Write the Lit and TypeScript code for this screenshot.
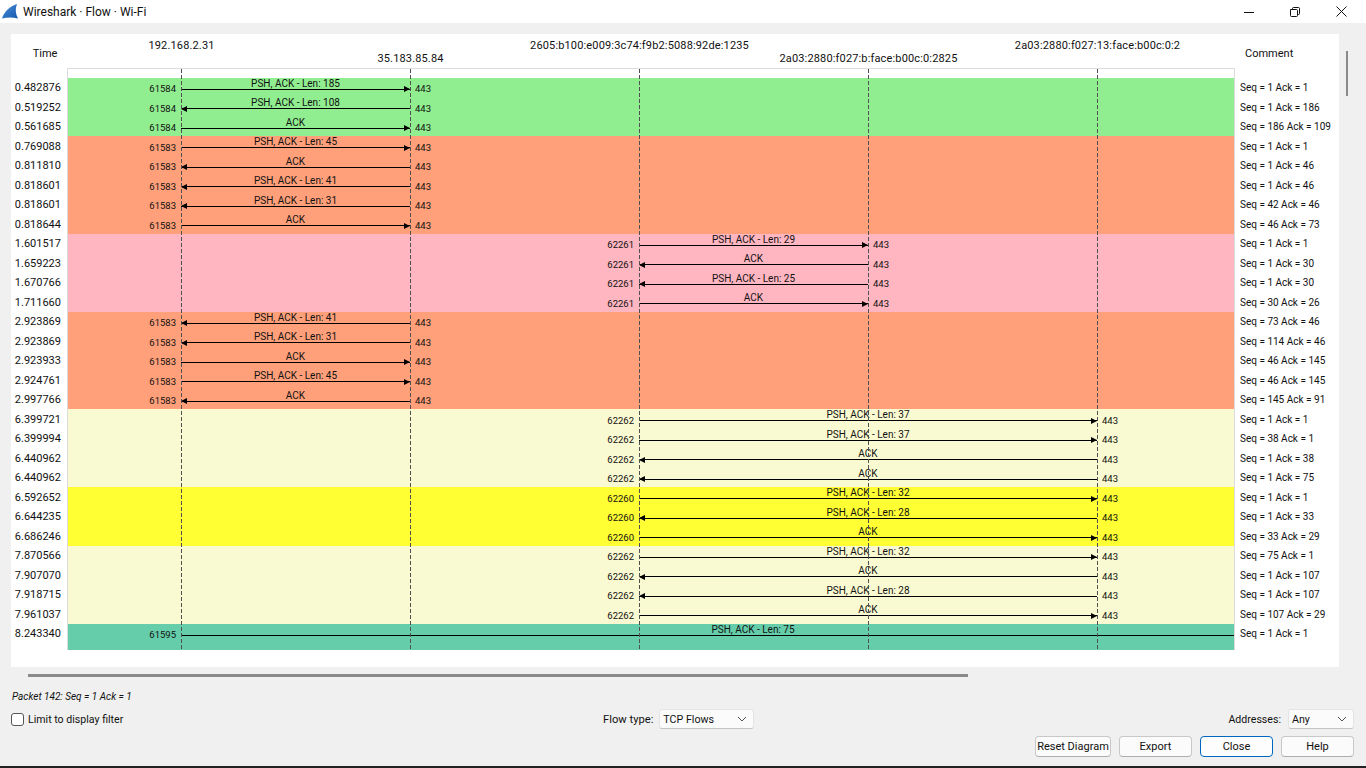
import { LitElement, html, css } from 'lit';
import { customElement } from 'lit/decorators.js';

const NODE_STEP = 229;
const NODE_START = 113;
const nodeX = (i: number) => NODE_START + NODE_STEP * i;

const NODES = [
  { name: '192.168.2.31', low: false },
  { name: '35.183.85.84', low: true },
  { name: '2605:b100:e009:3c74:f9b2:5088:92de:1235', low: false },
  { name: '2a03:2880:f027:b:face:b00c:0:2825', low: true },
  { name: '2a03:2880:f027:13:face:b00c:0:2', low: false },
];

// time, direction (r / l), label, seq, ack
type Row = [string, 'r' | 'l', string, number, number];
interface Flow {
  color: string;
  port: string;
  from: number;
  to: number;
  rows: Row[];
}

const len = (n: number) => `PSH, ACK - Len: ${n}`;

const FLOWS: Flow[] = [
  { color: '#90ee90', port: '61584', from: 0, to: 1, rows: [
    ['0.482876', 'r', len(185), 1, 1],
    ['0.519252', 'l', len(108), 1, 186],
    ['0.561685', 'r', 'ACK', 186, 109],
  ] },
  { color: '#ffa07a', port: '61583', from: 0, to: 1, rows: [
    ['0.769088', 'r', len(45), 1, 1],
    ['0.811810', 'l', 'ACK', 1, 46],
    ['0.818601', 'l', len(41), 1, 46],
    ['0.818601', 'l', len(31), 42, 46],
    ['0.818644', 'r', 'ACK', 46, 73],
  ] },
  { color: '#ffb6c1', port: '62261', from: 2, to: 3, rows: [
    ['1.601517', 'r', len(29), 1, 1],
    ['1.659223', 'l', 'ACK', 1, 30],
    ['1.670766', 'l', len(25), 1, 30],
    ['1.711660', 'r', 'ACK', 30, 26],
  ] },
  { color: '#ffa07a', port: '61583', from: 0, to: 1, rows: [
    ['2.923869', 'l', len(41), 73, 46],
    ['2.923869', 'l', len(31), 114, 46],
    ['2.923933', 'r', 'ACK', 46, 145],
    ['2.924761', 'r', len(45), 46, 145],
    ['2.997766', 'l', 'ACK', 145, 91],
  ] },
  { color: '#fafad2', port: '62262', from: 2, to: 4, rows: [
    ['6.399721', 'r', len(37), 1, 1],
    ['6.399994', 'r', len(37), 38, 1],
    ['6.440962', 'l', 'ACK', 1, 38],
    ['6.440962', 'l', 'ACK', 1, 75],
  ] },
  { color: '#ffff33', port: '62260', from: 2, to: 4, rows: [
    ['6.592652', 'r', len(32), 1, 1],
    ['6.644235', 'l', len(28), 1, 33],
    ['6.686246', 'r', 'ACK', 33, 29],
  ] },
  { color: '#fafad2', port: '62262', from: 2, to: 4, rows: [
    ['7.870566', 'r', len(32), 75, 1],
    ['7.907070', 'l', 'ACK', 1, 107],
    ['7.918715', 'l', len(28), 1, 107],
    ['7.961037', 'r', 'ACK', 107, 29],
  ] },
];

const LAST = { time: '8.243340', port: '61595', label: len(75), seq: 1, ack: 1 };

const chevron = html`<svg class="chev" width="10" height="6" viewBox="0 0 10 6">
  <path d="M1 1l4 4 4-4" fill="none" stroke="#555" stroke-width="1" />
</svg>`;

@customElement('app-root')
export class AppRoot extends LitElement {
  static styles = css`
    :host {
      display: flex;
      flex-direction: column;
      width: 1366px;
      height: 768px;
      overflow: hidden;
      background: #f0f0f0;
      color: #111;
      font-family: Roboto, 'Liberation Sans', sans-serif;
      font-size: 12px;
    }
    .titlebar {
      display: flex;
      align-items: center;
      height: 23px;
      background: #fff;
      flex: none;
    }
    .titlebar .logo { margin-left: 2px; }
    .titlebar .title { margin-left: 3px; font-size: 12px; }
    .controls { display: flex; margin-left: auto; align-items: center; }
    .controls svg { display: block; }
    .controls .min { margin-right: 36px; }
    .controls .max { margin-right: 36px; }
    .controls .close { margin-right: 19px; }

    .main { display: flex; margin-top: 11px; padding-left: 11px; flex: none; }
    .canvas {
      display: flex;
      width: 1328px;
      height: 633px;
      background: #fff;
    }
    .vthumb {
      width: 2px;
      height: 45px;
      margin: 17px 0 0 7px;
      background: #8a8a8a;
    }

    .time-col { width: 56px; flex: none; }
    .comment-col { width: 104px; flex: none; }
    .col-head { height: 44px; display: flex; align-items: flex-start; padding-top: 13px; box-sizing: border-box; font-size: 11px; }
    .time-col .col-head { justify-content: center; padding-left: 12px; }
    .comment-col .col-head { padding-left: 10px; }
    .cell { height: 19.5px; line-height: 20px; font-size: 11px; white-space: nowrap; }
    .time-col .cell { text-align: right; padding-right: 6px; }
    .comment-col .cell { padding-left: 5px; font-size: 10px; }

    .plot-wrap { width: 1168px; flex: none; display: flex; flex-direction: column; }
    .node-heads {
      display: grid;
      grid-template-columns: repeat(5, 229px);
      height: 34px;
      flex: none;
    }
    .node-head { text-align: center; font-size: 11px; padding-top: 5px; white-space: nowrap; letter-spacing: 0.15px; }
    .node-head.low { padding-top: 18px; }
    .plot {
      position: relative;
      height: 582px;
      box-sizing: border-box;
      border: 1px solid #dcdcdc;
      border-bottom: none;
      padding-top: 8.9px;
    }
    .band { display: flow-root; }
    .row { position: relative; height: 19.5px; }
    .row.last { height: 26.1px; }
    .lifeline {
      position: absolute;
      top: 0;
      bottom: 0;
      width: 1px;
      background: repeating-linear-gradient(to bottom, #505050 0 4px, transparent 4px 6px);
    }
    .line { position: absolute; top: 11px; height: 1px; background: #000; }
    .head {
      position: absolute;
      top: -2.5px;
      width: 0;
      height: 0;
      border-top: 3px solid transparent;
      border-bottom: 3px solid transparent;
    }
    .head.r { right: 0; border-left: 6px solid #000; }
    .head.l { left: 0; border-right: 6px solid #000; }
    .label {
      position: absolute;
      top: 0;
      line-height: 11px;
      font-size: 10px;
      white-space: nowrap;
      transform: translateX(-50%);
    }
    .port { position: absolute; top: 5.5px; line-height: 12px; font-size: 9.5px; }
    .port.left { transform: translateX(-100%); }

    .hscroll { width: 940px; height: 3px; margin: 7px 0 0 28px; background: #8a8a8a; flex: none; }
    .status { margin: 13px 0 0 12px; height: 14px; line-height: 14px; font-size: 10px; font-style: italic; flex: none; }

    .options { display: flex; align-items: center; height: 20px; margin-top: 5px; padding: 0 12px 0 11px; flex: none; }
    .check { display: flex; align-items: center; gap: 4px; width: 592px; font-size: 10.6px; }
    .box { width: 11px; height: 11px; border: 1px solid #555; border-radius: 3px; background: #fff; }
    .flow { display: flex; align-items: center; gap: 6px; font-size: 11.2px; }
    .addr { display: flex; align-items: center; gap: 7px; margin-left: auto; font-size: 10.6px; }
    .select {
      display: flex;
      align-items: center;
      justify-content: space-between;
      box-sizing: border-box;
      height: 20px;
      padding: 0 6px 0 3px;
      background: #fbfbfb;
      border: 1px solid #e4e4e4;
      border-bottom-color: #c4c4c4;
      border-radius: 3px;
      font-size: 10.7px;
    }
    .select.flow-select { width: 95px; }
    .select.addr-select { width: 66px; }

    .buttons { display: flex; justify-content: flex-end; gap: 8px; margin-top: 7px; padding-right: 12px; flex: none; }
    button {
      width: 73px;
      height: 21px;
      padding: 0;
      font: inherit;
      font-size: 11px;
      white-space: nowrap;
      color: inherit;
      background: #fbfbfb;
      border: 1px solid #c8c8c8;
      border-bottom-color: #aeaeae;
      border-radius: 4px;
    }
    button.wide { width: 76px; }
    button.primary { border-color: #0067c0; background: #fdfdfd; }

    .edge { margin-top: auto; height: 2px; background: #222; flex: none; }
  `;

  private renderArrow(flow: Flow, row: Row) {
    const [, dir, label] = row;
    const x1 = nodeX(flow.from);
    const x2 = nodeX(flow.to);
    return html`<div class="row">
      <span class="label" style="left:${(x1 + x2) / 2}px">${label}</span>
      <span class="port left" style="left:${x1 - 5}px">${flow.port}</span>
      <span class="port" style="left:${x2 + 5}px">443</span>
      <div class="line" style="left:${x1}px;width:${x2 - x1}px"><i class="head ${dir}"></i></div>
    </div>`;
  }

  render() {
    const rows = FLOWS.flatMap((f) => f.rows);
    return html`
      <div class="titlebar">
        <svg class="logo" width="18" height="17" viewBox="0 0 18 17">
          <defs>
            <linearGradient id="fin" x1="0" y1="0" x2="1" y2="1">
              <stop offset="0" stop-color="#4a8fdc" />
              <stop offset="1" stop-color="#1557ab" />
            </linearGradient>
          </defs>
          <path d="M0 15.5C2 9 8 3 15 1 13 6 13.5 11 16 15.5 10 14 5 14.5 0 15.5z" fill="url(#fin)" />
        </svg>
        <span class="title">Wireshark · Flow · Wi-Fi</span>
        <div class="controls">
          <svg class="min" width="10" height="10" viewBox="0 0 10 10"><path d="M0 5.5h10" stroke="#111" /></svg>
          <svg class="max" width="10" height="10" viewBox="0 0 10 10">
            <path d="M.5 2.5h6a1 1 0 0 1 1 1v5a1 1 0 0 1-1 1h-5a1 1 0 0 1-1-1zM2.5 2.5v-1a1 1 0 0 1 1-1h5a1 1 0 0 1 1 1v5a1 1 0 0 1-1 1h-1" fill="none" stroke="#111" />
          </svg>
          <svg class="close" width="11" height="11" viewBox="0 0 11 11"><path d="M.5.5l10 10M10.5.5l-10 10" stroke="#111" /></svg>
        </div>
      </div>

      <div class="main">
        <div class="canvas">
          <div class="time-col">
            <div class="col-head">Time</div>
            ${rows.map((r) => html`<div class="cell">${r[0]}</div>`)}
            <div class="cell">${LAST.time}</div>
          </div>
          <div class="plot-wrap">
            <div class="node-heads">
              ${NODES.map((n) => html`<div class="node-head ${n.low ? 'low' : ''}">${n.name}</div>`)}
            </div>
            <div class="plot">
              ${FLOWS.map((f) => html`<div class="band" style="background:${f.color}">
                ${f.rows.map((r) => this.renderArrow(f, r))}
              </div>`)}
              <div class="band" style="background:#66cdaa">
                <div class="row last">
                  <span class="label" style="left:685px">${LAST.label}</span>
                  <span class="port left" style="left:${nodeX(0) - 5}px">${LAST.port}</span>
                  <div class="line" style="left:${nodeX(0)}px;right:0"></div>
                </div>
              </div>
              ${NODES.map((_, i) => html`<div class="lifeline" style="left:${nodeX(i)}px"></div>`)}
            </div>
          </div>
          <div class="comment-col">
            <div class="col-head">Comment</div>
            ${rows.map((r) => html`<div class="cell">Seq = ${r[3]} Ack = ${r[4]}</div>`)}
            <div class="cell">Seq = ${LAST.seq} Ack = ${LAST.ack}</div>
          </div>
        </div>
        <div class="vthumb"></div>
      </div>

      <div class="hscroll"></div>
      <div class="status">Packet 142: Seq = 1 Ack = 1</div>

      <div class="options">
        <label class="check"><span class="box"></span>Limit to display filter</label>
        <div class="flow">
          <span>Flow type:</span>
          <div class="select flow-select"><span>TCP Flows</span>${chevron}</div>
        </div>
        <div class="addr">
          <span>Addresses:</span>
          <div class="select addr-select"><span>Any</span>${chevron}</div>
        </div>
      </div>

      <div class="buttons">
        <button class="wide">Reset Diagram</button>
        <button>Export</button>
        <button class="primary">Close</button>
        <button>Help</button>
      </div>
      <div class="edge"></div>
    `;
  }
}
